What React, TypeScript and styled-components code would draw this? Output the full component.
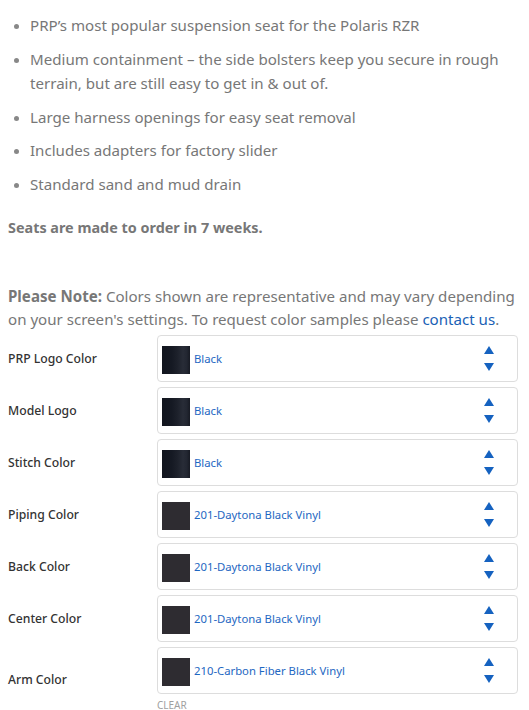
import React from "react";
import styled, { createGlobalStyle } from "styled-components";

const Global = createGlobalStyle`
  html, body { margin: 0; padding: 0; background: #fff; }
  body { font-family: "Noto Sans", "Open Sans", Arial, sans-serif; }
`;

const Page = styled.div`
  width: 510px;
  padding: 13px 11px 0 8px;
`;

const Bullets = styled.ul`
  margin: 0;
  padding: 0 0 0 22px;
  list-style: disc;
  color: #777;
  font-size: 15.1px;
  line-height: 24.5px;
`;

const Bullet = styled.li`
  margin-bottom: 9px;
  &::marker { font-size: 13px; color: #888; }
`;

const Lead = styled.p`
  margin: 20px 0 0;
  color: #777;
  font-size: 14.4px;
  font-weight: 700;
  line-height: 24px;
`;

const Note = styled.p`
  margin: 45px 0 0;
  color: #777;
  font-size: 15.1px;
  line-height: 23px;
  b { font-weight: 700; }
`;

const Link = styled.a`
  color: #1a61b5;
  text-decoration: none;
`;

const Options = styled.div`
  margin-top: 4px;
  display: flex;
  flex-direction: column;
  gap: 5px;
`;

const Row = styled.div`
  display: grid;
  grid-template-columns: 149px 1fr;
  align-items: center;
`;

const Label = styled.div`
  color: #333;
  font-size: 12.2px;
  font-weight: 500;
`;

const Field = styled.div`
  display: flex;
  flex-direction: column;
`;

const Select = styled.div`
  height: 45px;
  border: 1px solid #ddd;
  border-radius: 4px;
  display: flex;
  align-items: center;
  padding: 0 22px 0 4px;
  gap: 4px;
`;

const Swatch = styled.div<{ $kind: "black" | "vinyl" }>`
  width: 28px;
  height: 28px;
  flex: none;
  margin-top: 2px;
  background: ${(p) =>
    p.$kind === "black"
      ? "linear-gradient(90deg, #12151e 0%, #151923 35%, #1d212b 55%, #282c37 75%, #232732 88%, #171a23 100%)"
      : "#2e2c31"};
`;

const Value = styled.span`
  flex: 1;
  color: #1e67c2;
  font-size: 11.3px;
`;

const Arrows = styled.div`
  display: flex;
  flex-direction: column;
  gap: 7px;
  align-items: center;
`;

const Clear = styled.div`
  color: #a0a0a0;
  font-size: 10px;
  line-height: 12px;
  margin-top: 5px;
`;

const ArrowIcon = ({ down }: { down?: boolean }) => (
  <svg width="12" height="10" viewBox="0 0 12 10" style={{ display: "block" }}>
    <polygon points={down ? "1,1 11,1 6,9" : "6,1 11,9 1,9"} fill="#1562c0" />
  </svg>
);

const options = [
  { label: "PRP Logo Color", value: "Black", kind: "black" as const },
  { label: "Model Logo", value: "Black", kind: "black" as const },
  { label: "Stitch Color", value: "Black", kind: "black" as const },
  { label: "Piping Color", value: "201-Daytona Black Vinyl", kind: "vinyl" as const },
  { label: "Back Color", value: "201-Daytona Black Vinyl", kind: "vinyl" as const },
  { label: "Center Color", value: "201-Daytona Black Vinyl", kind: "vinyl" as const },
  { label: "Arm Color", value: "210-Carbon Fiber Black Vinyl", kind: "vinyl" as const, clear: true },
];

export default function App() {
  return (
    <>
      <Global />
      <Page>
        <Bullets>
          <Bullet>PRP’s most popular suspension seat for the Polaris RZR</Bullet>
          <Bullet>
            Medium containment – the side bolsters keep you secure in rough terrain, but are still easy to get in &amp; out of.
          </Bullet>
          <Bullet>Large harness openings for easy seat removal</Bullet>
          <Bullet>Includes adapters for factory slider</Bullet>
          <Bullet>Standard sand and mud drain</Bullet>
        </Bullets>
        <Lead>Seats are made to order in 7 weeks.</Lead>
        <Note>
          <b>Please Note:</b> Colors shown are representative and may vary depending on your screen's settings. To request color samples please{" "}
          <Link href="#">contact us</Link>.
        </Note>
        <Options>
          {options.map((o) => (
            <Row key={o.label}>
              <Label>{o.label}</Label>
              <Field>
                <Select>
                  <Swatch $kind={o.kind} />
                  <Value>{o.value}</Value>
                  <Arrows>
                    <ArrowIcon />
                    <ArrowIcon down />
                  </Arrows>
                </Select>
                {o.clear && <Clear>CLEAR</Clear>}
              </Field>
            </Row>
          ))}
        </Options>
      </Page>
    </>
  );
}
